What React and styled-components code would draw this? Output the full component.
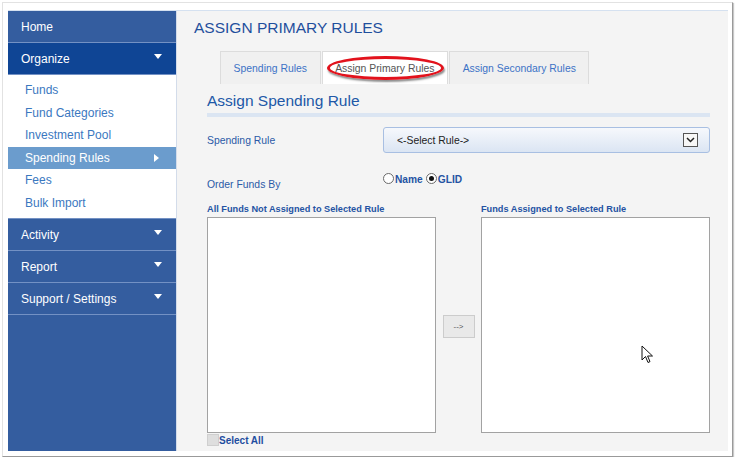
import React from 'react'
import styled, { createGlobalStyle } from 'styled-components'

const GlobalStyle = createGlobalStyle`
  html, body {
    margin: 0;
    padding: 0;
    background: #ffffff;
    font-family: "Liberation Sans", Arial, sans-serif;
  }
`

const Frame = styled.div`
  margin: 2px 0 0 2px;
  padding: 7px 4px 5px 5px;
  box-sizing: border-box;
  width: 731px;
  height: 455px;
  border: 1px solid #e2e2e2;
  border-right-color: #9a9a9a;
  border-bottom-color: #9a9a9a;
  box-shadow: 1px 1px 1px #c8c8c8;
  background: #ffffff;
`

const Shell = styled.div`
  display: flex;
  width: 720px;
  height: 441px;
  border-top: 1px solid #d5e1f0;
  box-sizing: border-box;
`

const Sidebar = styled.nav`
  width: 169px;
  flex-shrink: 0;
  display: flex;
  flex-direction: column;
  background: #345d9f;
  border-right: 1px solid #d3dcea;
  box-sizing: border-box;
`

const NavHeader = styled.div`
  height: 32px;
  box-sizing: border-box;
  display: flex;
  align-items: center;
  justify-content: space-between;
  padding: 0 14px 0 13px;
  background: ${(p) => (p.$open ? '#0f4595' : '#345d9f')};
  border-bottom: 1px solid #7391c4;
  color: #ffffff;
  font-size: 12px;
`

const DownCaret = styled.span`
  width: 0;
  height: 0;
  border-left: 4px solid transparent;
  border-right: 4px solid transparent;
  border-top: 5px solid #ffffff;
  margin-top: -4px;
`

const RightCaret = styled.span`
  width: 0;
  height: 0;
  border-top: 4px solid transparent;
  border-bottom: 4px solid transparent;
  border-left: 5px solid #ffffff;
  margin-right: 17px;
`

const SubMenu = styled.div`
  background: #ffffff;
  padding: 4px 0;
  border-bottom: 1px solid #7391c4;
  display: flex;
  flex-direction: column;
`

const SubItem = styled.div`
  height: 22.5px;
  display: flex;
  align-items: center;
  justify-content: space-between;
  padding-left: 17px;
  font-size: 12px;
  color: ${(p) => (p.$active ? '#ffffff' : '#3b78bf')};
  background: ${(p) => (p.$active ? '#6b9ccd' : 'transparent')};
`

const Main = styled.main`
  flex: 1;
  background: #f4f4f4;
  padding: 8px 18px 0 17px;
  box-sizing: border-box;
  display: flex;
  flex-direction: column;
`

const PageTitle = styled.h1`
  margin: 0;
  font-size: 15.5px;
  line-height: 18px;
  font-weight: normal;
  color: #1f4f9d;
  height: 32px;
`

const TabRow = styled.div`
  position: relative;
  display: flex;
  gap: 1px;
  margin-left: 26px;
  height: 33px;
`

const Tab = styled.div`
  display: flex;
  align-items: center;
  padding: 0 12.6px;
  font-size: 10.4px;
  border: 1px solid #dcdcdc;
  border-bottom: none;
  background: ${(p) => (p.$active ? '#ffffff' : '#f0f0f0')};
  color: ${(p) => (p.$active ? '#555555' : '#3c72c6')};
  white-space: nowrap;
`

const Highlight = styled.span`
  position: absolute;
  left: 107px;
  top: 5px;
  width: 117px;
  height: 24px;
  box-sizing: border-box;
  border: 3px solid #e2121c;
  border-radius: 50%;
  box-shadow: 1px 2px 2px rgba(0, 0, 0, 0.45);
`

const Form = styled.section`
  margin-left: 13px;
  display: flex;
  flex-direction: column;
`

const SectionTitle = styled.h2`
  margin: 8px 0 0;
  font-size: 15.5px;
  line-height: 18px;
  font-weight: normal;
  color: #2158a7;
`

const Divider = styled.div`
  height: 4px;
  margin-top: 3px;
  background: #dbe5f2;
`

const FieldRow = styled.div`
  display: grid;
  grid-template-columns: 176px 1fr;
  align-items: ${(p) => p.$align || 'center'};
  margin-top: ${(p) => p.$top}px;
`

const Label = styled.label`
  font-size: 10.4px;
  color: #2b5aa7;
  margin-top: ${(p) => p.$shift || 0}px;
`

const SelectBox = styled.div`
  height: 26px;
  box-sizing: border-box;
  border: 1px solid #a8bfe2;
  border-radius: 3px;
  background: linear-gradient(#f6f8fc, #dbe5f3);
  display: flex;
  align-items: center;
  justify-content: space-between;
  padding: 0 11px 0 13px;
  font-size: 10.4px;
  color: #222222;
`

const ArrowBox = styled.span`
  width: 15px;
  height: 14px;
  box-sizing: border-box;
  border: 1px solid #555555;
  background: #f7f7f7;
  display: flex;
  align-items: center;
  justify-content: center;
`

const RadioGroup = styled.div`
  display: flex;
  align-items: center;
  gap: 3px;
`

const RadioOption = styled.span`
  display: flex;
  align-items: center;
  font-size: 10.2px;
  font-weight: bold;
  color: #2453a3;
`

const RadioDot = styled.span`
  width: 11px;
  height: 11px;
  box-sizing: border-box;
  border-radius: 50%;
  border: 1px solid #6a6a6a;
  background: #ffffff;
  margin-right: 1px;
  margin-top: -2px;
  display: flex;
  align-items: center;
  justify-content: center;
  &::after {
    content: '';
    width: 5px;
    height: 5px;
    border-radius: 50%;
    background: ${(p) => (p.$checked ? '#111111' : 'transparent')};
  }
`

const Lists = styled.div`
  display: grid;
  grid-template-columns: 229px 1fr 229px;
  column-gap: 6px;
  margin-top: 14px;
`

const ListLabel = styled.div`
  font-size: 9.2px;
  font-weight: bold;
  color: #2453a3;
  height: 13px;
`

const ListBox = styled.div`
  position: relative;
  height: 216px;
  background: #ffffff;
  border: 1px solid #a2a2a2;
  box-sizing: border-box;
`

const MoveColumn = styled.div`
  display: flex;
  justify-content: center;
  padding-top: 111px;
`

const MoveButton = styled.button`
  width: 32px;
  height: 23px;
  padding: 0;
  border: 1px solid #cccccc;
  background: #e9e9e9;
  color: #555555;
  font-family: "Liberation Sans", Arial, sans-serif;
  font-size: 8px;
`

const Cursor = styled.svg`
  position: absolute;
  left: 159px;
  top: 127px;
`

const SelectAll = styled.div`
  display: flex;
  align-items: center;
  margin-top: 1px;
  font-size: 10px;
  font-weight: bold;
  color: #1f4ea0;
`

const CheckBox = styled.span`
  width: 12px;
  height: 12px;
  box-sizing: border-box;
  background: #dedede;
  border: 1px solid #cfcfcf;
`

const submenu = ['Funds', 'Fund Categories', 'Investment Pool', 'Spending Rules', 'Fees', 'Bulk Import']

export default function App() {
  return (
    <>
      <GlobalStyle />
      <Frame>
        <Shell>
          <Sidebar>
            <NavHeader>Home</NavHeader>
            <NavHeader $open>
              Organize <DownCaret />
            </NavHeader>
            <SubMenu>
              {submenu.map((item) => (
                <SubItem key={item} $active={item === 'Spending Rules'}>
                  {item}
                  {item === 'Spending Rules' && <RightCaret />}
                </SubItem>
              ))}
            </SubMenu>
            <NavHeader>
              Activity <DownCaret />
            </NavHeader>
            <NavHeader>
              Report <DownCaret />
            </NavHeader>
            <NavHeader>
              Support / Settings <DownCaret />
            </NavHeader>
          </Sidebar>
          <Main>
            <PageTitle>ASSIGN PRIMARY RULES</PageTitle>
            <TabRow>
              <Tab>Spending Rules</Tab>
              <Tab $active>Assign Primary Rules</Tab>
              <Tab>Assign Secondary Rules</Tab>
              <Highlight />
            </TabRow>
            <Form>
              <SectionTitle>Assign Spending Rule</SectionTitle>
              <Divider />
              <FieldRow $top={10}>
                <Label>Spending Rule</Label>
                <SelectBox>
                  &lt;-Select Rule-&gt;
                  <ArrowBox>
                    <svg width="9" height="6" viewBox="0 0 9 6">
                      <path d="M1 1 L4.5 4.5 L8 1" fill="none" stroke="#222" strokeWidth="1.5" />
                    </svg>
                  </ArrowBox>
                </SelectBox>
              </FieldRow>
              <FieldRow $top={21} $align="start">
                <Label $shift={5}>Order Funds By</Label>
                <RadioGroup>
                  <RadioOption>
                    <RadioDot />
                    Name
                  </RadioOption>
                  <RadioOption>
                    <RadioDot $checked />
                    GLID
                  </RadioOption>
                </RadioGroup>
              </FieldRow>
              <Lists>
                <div>
                  <ListLabel>All Funds Not Assigned to Selected Rule</ListLabel>
                  <ListBox />
                </div>
                <MoveColumn>
                  <MoveButton>--&gt;</MoveButton>
                </MoveColumn>
                <div>
                  <ListLabel>Funds Assigned to Selected Rule</ListLabel>
                  <ListBox>
                    <Cursor width="13" height="20" viewBox="0 0 13 20">
                      <path
                        d="M1 1 L1 15 L4.5 11.5 L7 17.5 L9 16.6 L6.6 11 L11.5 11 Z"
                        fill="#ffffff"
                        stroke="#111111"
                        strokeWidth="1"
                        strokeLinejoin="round"
                      />
                    </Cursor>
                  </ListBox>
                </div>
              </Lists>
              <SelectAll>
                <CheckBox />
                Select All
              </SelectAll>
            </Form>
          </Main>
        </Shell>
      </Frame>
    </>
  )
}
